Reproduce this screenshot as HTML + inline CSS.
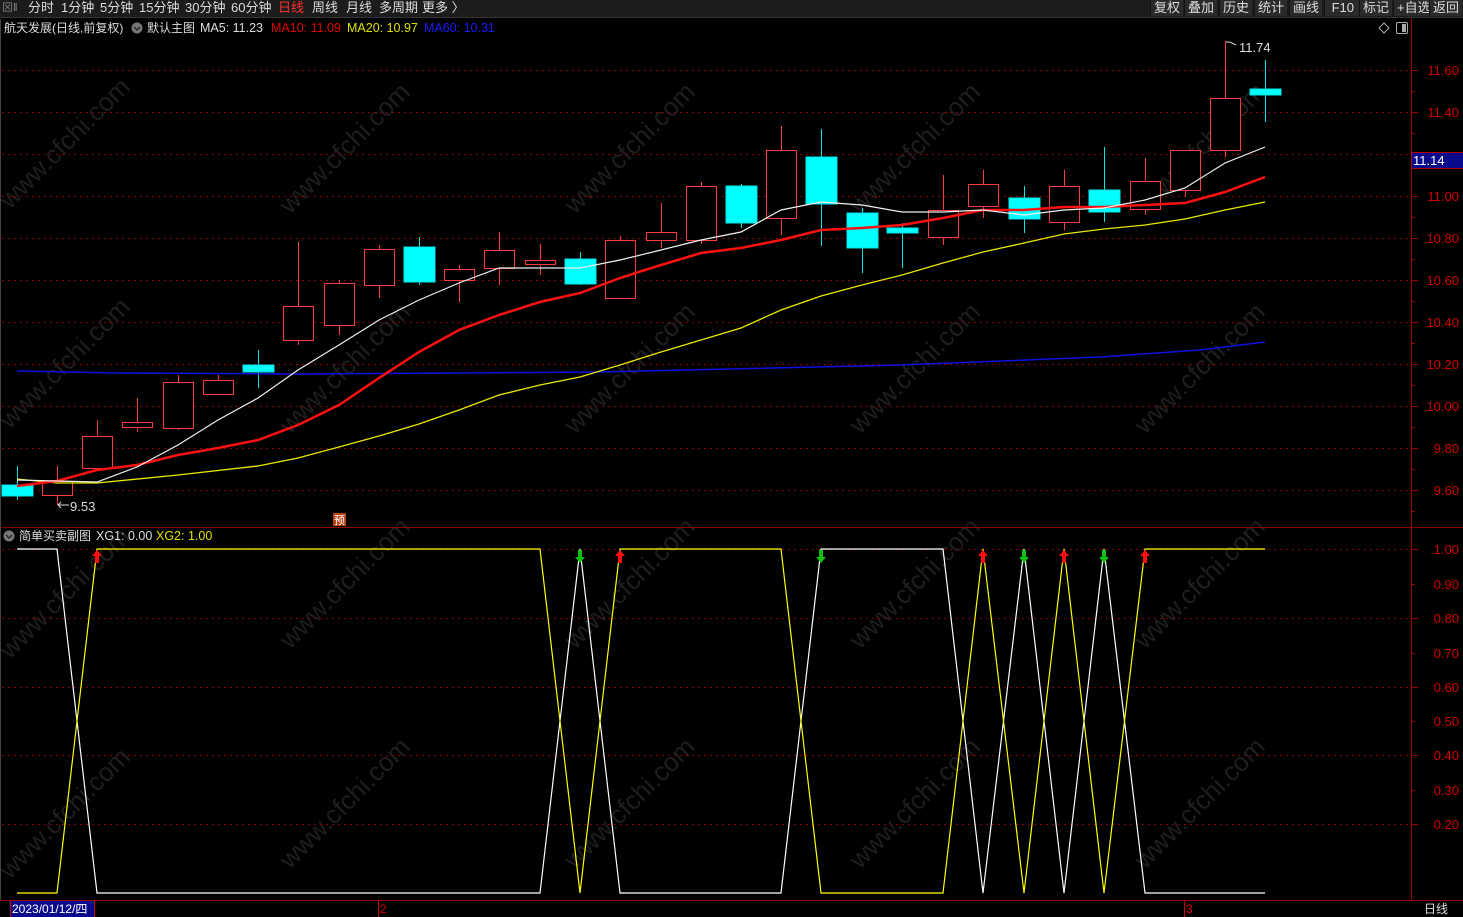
<!DOCTYPE html>
<html><head><meta charset="utf-8"><style>
html,body{margin:0;padding:0;background:#000;width:1463px;height:917px;overflow:hidden;font-family:"Liberation Sans","Noto Sans CJK SC",sans-serif}
#tb{position:absolute;left:0;top:0;width:1463px;height:17px;background:#1c1c1c;border-bottom:1px solid #333}
#tb span{position:absolute;top:0;font-size:13px;color:#ddd;line-height:16px}
.rb{background:#2a2a2a;border-left:1px solid #111;padding:0 3px}
svg{position:absolute;left:0;top:0}
</style></head><body>
<div id="tb">
<span style="left:2px;color:#888;font-size:11px">⊠‖</span>
<span style="left:28px">分时</span><span style="left:61px">1分钟</span><span style="left:100px">5分钟</span><span style="left:139px">15分钟</span><span style="left:185px">30分钟</span><span style="left:231px">60分钟</span><span style="left:278px;color:#ff3030">日线</span><span style="left:312px">周线</span><span style="left:346px">月线</span><span style="left:379px">多周期</span><span style="left:422px">更多 〉</span>
<span class="rb" style="left:1150px">复权</span><span class="rb" style="left:1184px">叠加</span><span class="rb" style="left:1219px">历史</span><span class="rb" style="left:1254px">统计</span><span class="rb" style="left:1289px">画线</span><span class="rb" style="left:1324px">&nbsp;F10&nbsp;</span><span class="rb" style="left:1359px">标记</span><span class="rb" style="left:1393px">+自选</span><span class="rb" style="left:1429px">返回</span>
</div>
<svg width="1463" height="917" viewBox="0 0 1463 917" font-family="Liberation Sans, Noto Sans CJK SC, sans-serif">
<g fill="#1e1e1e" font-size="26">
<text transform="translate(10,210) rotate(-45)">www.cfchi.com</text>
<text transform="translate(290,215) rotate(-45)">www.cfchi.com</text>
<text transform="translate(575,215) rotate(-45)">www.cfchi.com</text>
<text transform="translate(860,215) rotate(-45)">www.cfchi.com</text>
<text transform="translate(1145,215) rotate(-45)">www.cfchi.com</text>
<text transform="translate(10,430) rotate(-45)">www.cfchi.com</text>
<text transform="translate(290,435) rotate(-45)">www.cfchi.com</text>
<text transform="translate(575,435) rotate(-45)">www.cfchi.com</text>
<text transform="translate(860,435) rotate(-45)">www.cfchi.com</text>
<text transform="translate(1145,435) rotate(-45)">www.cfchi.com</text>
<text transform="translate(10,660) rotate(-45)">www.cfchi.com</text>
<text transform="translate(290,650) rotate(-45)">www.cfchi.com</text>
<text transform="translate(575,650) rotate(-45)">www.cfchi.com</text>
<text transform="translate(860,650) rotate(-45)">www.cfchi.com</text>
<text transform="translate(1145,650) rotate(-45)">www.cfchi.com</text>
<text transform="translate(10,880) rotate(-45)">www.cfchi.com</text>
<text transform="translate(290,870) rotate(-45)">www.cfchi.com</text>
<text transform="translate(575,870) rotate(-45)">www.cfchi.com</text>
<text transform="translate(860,870) rotate(-45)">www.cfchi.com</text>
<text transform="translate(1145,870) rotate(-45)">www.cfchi.com</text>
</g>
<line x1="1411.5" y1="19" x2="1411.5" y2="900" stroke="#a00000"/>
<line x1="0" y1="527.5" x2="1463" y2="527.5" stroke="#8a0000"/>
<line x1="0" y1="900.5" x2="1463" y2="900.5" stroke="#a00000"/>
<line x1="0.5" y1="19" x2="0.5" y2="900" stroke="#444"/>
<g stroke="#8a0000" stroke-dasharray="2,4">
<line x1="2" y1="70.5" x2="1411" y2="70.5"/><line x1="2" y1="112.5" x2="1411" y2="112.5"/><line x1="2" y1="154.5" x2="1411" y2="154.5"/><line x1="2" y1="196.5" x2="1411" y2="196.5"/><line x1="2" y1="238.5" x2="1411" y2="238.5"/><line x1="2" y1="280.5" x2="1411" y2="280.5"/><line x1="2" y1="322.5" x2="1411" y2="322.5"/><line x1="2" y1="364.5" x2="1411" y2="364.5"/><line x1="2" y1="406.5" x2="1411" y2="406.5"/><line x1="2" y1="448.5" x2="1411" y2="448.5"/><line x1="2" y1="490.5" x2="1411" y2="490.5"/>
<line x1="2" y1="549.5" x2="1411" y2="549.5"/><line x1="2" y1="618.5" x2="1411" y2="618.5"/><line x1="2" y1="687.5" x2="1411" y2="687.5"/><line x1="2" y1="755.5" x2="1411" y2="755.5"/><line x1="2" y1="824.5" x2="1411" y2="824.5"/>
</g>
<g fill="#d00000" font-size="13" text-anchor="end">
<text x="1459" y="75">11.60</text><text x="1459" y="117">11.40</text><text x="1459" y="201">11.00</text><text x="1459" y="243">10.80</text><text x="1459" y="285">10.60</text><text x="1459" y="327">10.40</text><text x="1459" y="369">10.20</text><text x="1459" y="411">10.00</text><text x="1459" y="453">9.80</text><text x="1459" y="495">9.60</text>
<text x="1459" y="554">1.00</text><text x="1459" y="589">0.90</text><text x="1459" y="623">0.80</text><text x="1459" y="658">0.70</text><text x="1459" y="692">0.60</text><text x="1459" y="726">0.50</text><text x="1459" y="760">0.40</text><text x="1459" y="795">0.30</text><text x="1459" y="829">0.20</text>
</g>
<g stroke="#a00000">
<line x1="1411" y1="70.5" x2="1418" y2="70.5"/><line x1="1411" y1="91.5" x2="1415" y2="91.5"/><line x1="1411" y1="112.5" x2="1418" y2="112.5"/><line x1="1411" y1="133.5" x2="1415" y2="133.5"/><line x1="1411" y1="196.5" x2="1418" y2="196.5"/><line x1="1411" y1="217.5" x2="1415" y2="217.5"/><line x1="1411" y1="238.5" x2="1418" y2="238.5"/><line x1="1411" y1="259.5" x2="1415" y2="259.5"/><line x1="1411" y1="280.5" x2="1418" y2="280.5"/><line x1="1411" y1="301.5" x2="1415" y2="301.5"/><line x1="1411" y1="322.5" x2="1418" y2="322.5"/><line x1="1411" y1="343.5" x2="1415" y2="343.5"/><line x1="1411" y1="364.5" x2="1418" y2="364.5"/><line x1="1411" y1="385.5" x2="1415" y2="385.5"/><line x1="1411" y1="406.5" x2="1418" y2="406.5"/><line x1="1411" y1="427.5" x2="1415" y2="427.5"/><line x1="1411" y1="448.5" x2="1418" y2="448.5"/><line x1="1411" y1="469.5" x2="1415" y2="469.5"/><line x1="1411" y1="490.5" x2="1418" y2="490.5"/><line x1="1411" y1="511.5" x2="1415" y2="511.5"/>
<line x1="1411" y1="549.5" x2="1418" y2="549.5"/><line x1="1411" y1="584.5" x2="1415" y2="584.5"/><line x1="1411" y1="618.5" x2="1418" y2="618.5"/><line x1="1411" y1="653.5" x2="1415" y2="653.5"/><line x1="1411" y1="687.5" x2="1418" y2="687.5"/><line x1="1411" y1="721.5" x2="1415" y2="721.5"/><line x1="1411" y1="755.5" x2="1418" y2="755.5"/><line x1="1411" y1="790.5" x2="1415" y2="790.5"/><line x1="1411" y1="824.5" x2="1418" y2="824.5"/>
</g>
<rect x="1411.5" y="152.5" width="52" height="16" fill="#0a0a8c" stroke="#b00000"/>
<text x="1413" y="165" fill="#fff" font-size="13">11.14</text>
<g stroke-width="1">
<g stroke="#00e5e5" fill="#00ffff">
<line x1="17.5" y1="466" x2="17.5" y2="500"/><rect x="2" y="485" width="31" height="11"/>
<line x1="258.5" y1="350" x2="258.5" y2="388"/><rect x="243" y="365" width="31" height="7"/>
<line x1="419.5" y1="237" x2="419.5" y2="285"/><rect x="404" y="247" width="31" height="35"/>
<line x1="580.5" y1="252" x2="580.5" y2="285"/><rect x="565" y="259" width="31" height="25"/>
<line x1="741.5" y1="184" x2="741.5" y2="228"/><rect x="726" y="186" width="31" height="37"/>
<line x1="821.5" y1="129" x2="821.5" y2="246"/><rect x="806" y="157" width="31" height="47"/>
<line x1="862.5" y1="208" x2="862.5" y2="273"/><rect x="847" y="213" width="31" height="35"/>
<line x1="902.5" y1="223" x2="902.5" y2="268"/><rect x="887" y="228" width="31" height="5"/>
<line x1="1024.5" y1="186" x2="1024.5" y2="233"/><rect x="1009" y="198" width="31" height="21"/>
<line x1="1104.5" y1="147" x2="1104.5" y2="222"/><rect x="1089" y="190" width="31" height="22"/>
<line x1="1265.5" y1="60" x2="1265.5" y2="122"/><rect x="1250" y="89" width="31" height="6"/>
</g>
<g stroke="#ff3b3b" fill="#000">
<line x1="57.5" y1="466" x2="57.5" y2="505"/><rect x="42.5" y="481.5" width="30" height="14"/>
<line x1="97.5" y1="420" x2="97.5" y2="470"/><rect x="82.5" y="436.5" width="30" height="32"/>
<line x1="137.5" y1="398" x2="137.5" y2="432"/><rect x="122.5" y="422.5" width="30" height="5"/>
<line x1="178.5" y1="375" x2="178.5" y2="430"/><rect x="163.5" y="382.5" width="30" height="46"/>
<line x1="218.5" y1="375" x2="218.5" y2="395"/><rect x="203.5" y="380.5" width="30" height="14"/>
<line x1="298.5" y1="242" x2="298.5" y2="345"/><rect x="283.5" y="306.5" width="30" height="34"/>
<line x1="339.5" y1="280" x2="339.5" y2="335"/><rect x="324.5" y="283.5" width="30" height="42"/>
<line x1="379.5" y1="245" x2="379.5" y2="298"/><rect x="364.5" y="249.5" width="30" height="36"/>
<line x1="459.5" y1="265" x2="459.5" y2="302"/><rect x="444.5" y="269.5" width="30" height="11"/>
<line x1="499.5" y1="232" x2="499.5" y2="285"/><rect x="484.5" y="250.5" width="30" height="18"/>
<line x1="540.5" y1="244" x2="540.5" y2="275"/><rect x="525.5" y="260.5" width="30" height="4"/>
<line x1="620.5" y1="236" x2="620.5" y2="298"/><rect x="605.5" y="240.5" width="30" height="58"/>
<line x1="661.5" y1="203" x2="661.5" y2="248"/><rect x="646.5" y="232.5" width="30" height="8"/>
<line x1="701.5" y1="182" x2="701.5" y2="244"/><rect x="686.5" y="186.5" width="30" height="54"/>
<line x1="781.5" y1="126" x2="781.5" y2="235"/><rect x="766.5" y="150.5" width="30" height="68"/>
<line x1="943.5" y1="175" x2="943.5" y2="245"/><rect x="928.5" y="210.5" width="30" height="27"/>
<line x1="983.5" y1="170" x2="983.5" y2="218"/><rect x="968.5" y="184.5" width="30" height="22"/>
<line x1="1064.5" y1="170" x2="1064.5" y2="230"/><rect x="1049.5" y="186.5" width="30" height="36"/>
<line x1="1145.5" y1="158" x2="1145.5" y2="215"/><rect x="1130.5" y="181.5" width="30" height="28"/>
<line x1="1185.5" y1="150" x2="1185.5" y2="197"/><rect x="1170.5" y="150.5" width="30" height="40"/>
<line x1="1225.5" y1="41" x2="1225.5" y2="157"/><rect x="1210.5" y="98.5" width="30" height="52"/>
</g>
</g>
<polyline fill="none" stroke="#1010e0" stroke-width="1.5" points="17,371 120,373 300,374 600,372 900,365 1100,357 1200,350 1265,342"/>
<polyline fill="none" stroke="#e8e800" stroke-width="1.3" points="17,479 57,483 97,483 178,475 258,466 298,458 339,447 379,436 419,424 459,410 499,395 540,385 580,377 620,365 661,352 701,340 741,328 781,310 821,296 862,285 902,275 943,263 983,252 1024,243 1064,234 1104,229 1145,225 1185,219 1225,210 1265,202"/>
<polyline fill="none" stroke="#ff1010" stroke-width="2.5" points="17,486 57,481 97,470 137,465 178,455 218,448 258,440 298,425 339,405 379,378 419,352 459,330 499,315 540,302 580,293 620,278 661,265 701,253 741,248 781,240 821,230 862,228 902,225 943,218 983,210 1024,210 1064,207 1104,207 1145,205 1185,203 1225,192 1265,177"/>
<polyline fill="none" stroke="#f0f0f0" stroke-width="1.2" points="17,480 97,482 137,467 178,445 218,420 258,398 298,370 339,345 379,320 419,300 459,283 499,268 540,268 580,268 620,260 661,250 701,240 741,232 781,210 821,202 862,205 902,212 943,212 983,210 1024,215 1064,210 1104,208 1145,200 1185,188 1225,163 1265,147"/>
<text x="1239" y="52" fill="#ddd" font-size="13">11.74</text>
<path d="M1226,42 h4 l6,3" stroke="#ddd" fill="none"/>
<text x="70" y="511" fill="#ddd" font-size="13">9.53</text>
<path d="M58,505 h11 M58,505 l3,-3 M58,505 l3,3" stroke="#ddd" fill="none"/>
<rect x="333" y="513" width="13" height="13" fill="#b84010"/>
<text x="334" y="524" fill="#fff" font-size="11">预</text>
<text x="4" y="32" fill="#ddd" font-size="12">航天发展(日线,前复权)</text>
<circle cx="137" cy="28" r="5.5" fill="#777"/><path d="M134,27 l3,3 l3,-3" stroke="#222" fill="none" stroke-width="1.3"/>
<text x="147" y="32" fill="#ddd" font-size="12">默认主图</text>
<text x="200" y="32" fill="#ddd" font-size="12.5">MA5: 11.23</text>
<text x="271" y="32" fill="#e00000" font-size="12.5">MA10: 11.09</text>
<text x="347" y="32" fill="#e0e000" font-size="12.5">MA20: 10.97</text>
<text x="424" y="32" fill="#1a1aff" font-size="12.5">MA60: 10.31</text>
<path d="M1379,28 l5,-5 l5,5 l-5,5z" stroke="#aaa" fill="none"/>
<rect x="1396.5" y="22.5" width="11" height="11" rx="1.5" stroke="#aaa" fill="none"/><rect x="1402" y="24" width="4" height="8" fill="#aaa"/>
<circle cx="9" cy="536" r="5.5" fill="#777"/><path d="M6,535 l3,3 l3,-3" stroke="#222" fill="none" stroke-width="1.3"/>
<text x="19" y="540" fill="#ddd" font-size="12">简单买卖副图</text>
<text x="96" y="540" fill="#ddd" font-size="12.5">XG1: 0.00</text>
<text x="156" y="540" fill="#e0e000" font-size="12.5">XG2: 1.00</text>
<polyline fill="none" stroke="#ffffff" stroke-width="1.2" points="17,549 57,549 97,893 540,893 580,549 620,893 781,893 821,549 943,549 983,893 1024,549 1064,893 1104,549 1145,893 1265,893"/>
<polyline fill="none" stroke="#ffff00" stroke-width="1.2" points="17,893 57,893 97,549 540,549 580,893 620,549 781,549 821,893 943,893 983,549 1024,893 1064,549 1104,893 1145,549 1265,549"/>
<g fill="#ff1010">
<path d="M97,550 l-5,6 h3 v7 h4 v-7 h3z"/><path d="M620,550 l-5,6 h3 v7 h4 v-7 h3z"/><path d="M983,550 l-5,6 h3 v7 h4 v-7 h3z"/><path d="M1064,550 l-5,6 h3 v7 h4 v-7 h3z"/><path d="M1145,550 l-5,6 h3 v7 h4 v-7 h3z"/>
</g>
<g fill="#10c010">
<path d="M580,563 l-5,-6 h3 v-7 h4 v7 h3z"/><path d="M821,563 l-5,-6 h3 v-7 h4 v7 h3z"/><path d="M1024,563 l-5,-6 h3 v-7 h4 v7 h3z"/><path d="M1104,563 l-5,-6 h3 v-7 h4 v7 h3z"/>
</g>
<rect x="10" y="901" width="84" height="16" fill="#0a0a8c"/>
<line x1="10.5" y1="901" x2="10.5" y2="917" stroke="#c00"/><line x1="94.5" y1="901" x2="94.5" y2="917" stroke="#c00"/>
<text x="12" y="913" fill="#fff" font-size="12">2023/01/12/四</text>
<line x1="378.5" y1="901" x2="378.5" y2="917" stroke="#c00"/><text x="380" y="913" fill="#e00000" font-size="12">2</text>
<line x1="1184.5" y1="901" x2="1184.5" y2="917" stroke="#c00"/><text x="1186" y="913" fill="#e00000" font-size="12">3</text>
<text x="1424" y="913" fill="#ddd" font-size="12">日线</text>
</svg>
</body></html>
